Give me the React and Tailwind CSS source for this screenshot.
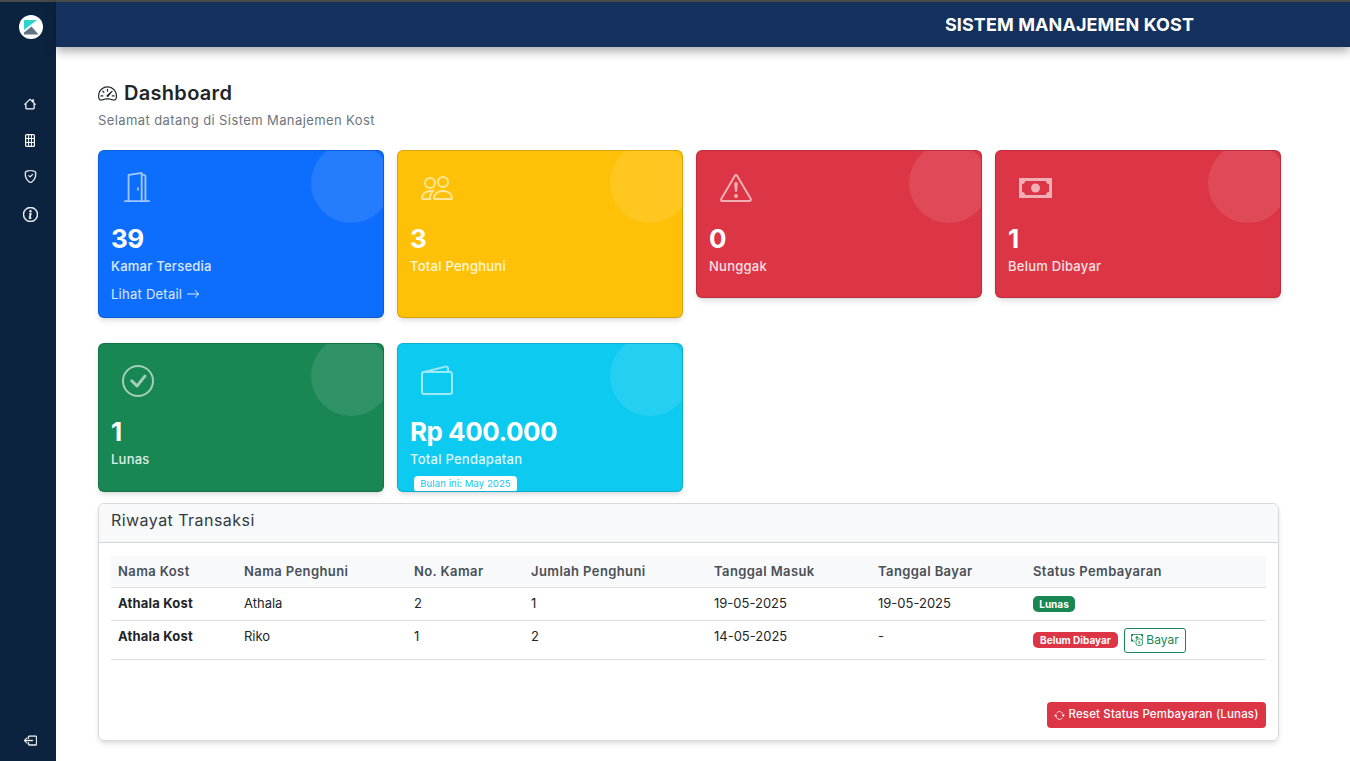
import {
  BsHouse,
  BsShieldCheck,
  BsInfoCircle,
  BsBoxArrowLeft,
  BsSpeedometer2,
  BsDoorOpen,
  BsPeople,
  BsExclamationTriangle,
  BsCheckCircle,
  BsWallet2,
  BsArrowRight,
  BsArrowRepeat,
  BsCashCoin,
} from 'react-icons/bs'

const font = { fontFamily: 'Inter, "Liberation Sans", sans-serif' }

const rows = [
  { kost: 'Athala Kost', nama: 'Athala', kamar: '2', jumlah: '1', masuk: '19-05-2025', bayar: '19-05-2025', lunas: true },
  { kost: 'Athala Kost', nama: 'Riko', kamar: '1', jumlah: '2', masuk: '14-05-2025', bayar: '-', lunas: false },
]

const cols = ['w-[126px]', 'w-[170px]', 'w-[117px]', 'w-[183px]', 'w-[164px]', 'w-[155px]', 'flex-1']
const heads = ['Nama Kost', 'Nama Penghuni', 'No. Kamar', 'Jumlah Penghuni', 'Tanggal Masuk', 'Tanggal Bayar', 'Status Pembayaran']

function CashIcon() {
  return (
    <svg width="33" height="20" viewBox="0 0 33 20" className="mt-[6px]" fill="currentColor">
      <path
        fillRule="evenodd"
        d="M0 0h33v20H0z M6 3a3 3 0 0 1-3 3v8a3 3 0 0 1 3 3h21a3 3 0 0 1 3-3V6a3 3 0 0 1-3-3z"
      />
      <circle cx="16.5" cy="10" r="4.5" />
    </svg>
  )
}

function RoomsIcon() {
  return (
    <svg width="10" height="13" viewBox="0 0 10 13" fill="none" stroke="currentColor" strokeWidth="1.2">
      <rect x="0.6" y="0.6" width="8.8" height="11.8" rx="1" />
      <path d="M3.6 0.6v11.8M6.4 0.6v11.8M0.6 4.5h8.8M0.6 8.5h8.8" strokeWidth="1" />
    </svg>
  )
}

function StatCard({ icon: Icon, value, label, bg, height, children, iconSize = 32 }) {
  return (
    <div className={`relative overflow-hidden rounded-md border border-black/15 shadow-md text-white px-[12px] ${bg} ${height}`}>
      <div className="absolute -top-2 -right-2 w-20 h-20 rounded-full bg-white/10" />
      <div className="h-[56px] pt-[21px] pl-[11px] flex items-start text-white/60">
        <Icon size={iconSize} />
      </div>
      <p className="text-[26px] leading-[40px] font-bold tracking-[-0.5px] mt-[12px]">{value}</p>
      <p className="text-[13px] leading-[18px] font-medium tracking-[0.25px] text-white/85 -mt-[2px]">{label}</p>
      {children}
    </div>
  )
}

export default function App() {
  return (
    <div className="flex h-[761px] bg-white overflow-hidden text-[#212529]" style={font}>
      {/* Sidebar */}
      <aside className="w-[56px] shrink-0 bg-[#0c2340] border-t-2 border-[#4a4a4a] flex flex-col items-center text-white">
        <svg width="24" height="24" viewBox="0 0 24 24" className="mt-[13px] ml-[6px]">
          <circle cx="12" cy="12" r="12" fill="#fff" />
          <path d="M5 5h13L5 15z" fill="#2dd4cf" />
          <path d="M5 19.5v-2L12.5 11.5l7 8z" fill="#5f7480" />
        </svg>
        <div className="flex flex-col items-center ml-[4px] mt-[47px]">
          <div className="h-[36px] flex items-center"><BsHouse size={12} strokeWidth={0.6} stroke="currentColor" /></div>
          <div className="h-[36px] flex items-center"><RoomsIcon /></div>
          <div className="h-[36px] flex items-center"><BsShieldCheck size={13} strokeWidth={0.5} stroke="currentColor" /></div>
          <div className="h-[38px] pt-[3px] flex items-center"><BsInfoCircle size={15} strokeWidth={0.6} stroke="currentColor" /></div>
        </div>
        <BsBoxArrowLeft size={13} strokeWidth={0.5} stroke="currentColor" className="mt-auto mb-[14px] ml-[4px]" />
      </aside>

      <div className="flex-1 min-w-0">
        {/* Topbar */}
        <header className="h-[47px] bg-[#14305c] border-t-2 border-[#4a4a4a] shadow-[0_4px_10px_rgba(0,0,0,0.35)] flex items-center justify-end pr-[156px]">
          <h1 className="text-[18px] font-bold tracking-[0.1px] text-white">SISTEM MANAJEMEN KOST</h1>
        </header>

        <main className="pl-[42px] pr-[71px] pt-[32px]">
          <div className="flex items-center gap-[7px] h-[28px]">
            <BsSpeedometer2 size={19} />
            <h2 className="text-[20px] font-semibold tracking-[0.3px]">Dashboard</h2>
          </div>
          <p className="text-[13px] leading-[20px] tracking-[0.4px] text-[#6c757d] mt-[3px]">Selamat datang di Sistem Manajemen Kost</p>

          <div className="grid grid-cols-[286px_286px_286px_286px] gap-x-[13px] items-start mt-[20px]">
            <StatCard icon={BsDoorOpen} value="39" label="Kamar Tersedia" bg="bg-[#0d6efd]" height="h-[168px]" iconSize={30}>
              <p className="text-[13px] leading-[18px] tracking-[0.25px] text-white/85 mt-[10px] flex items-center gap-1">
                Lihat Detail <BsArrowRight size={14} />
              </p>
            </StatCard>
            <StatCard icon={BsPeople} value="3" label="Total Penghuni" bg="bg-[#ffc107]" height="h-[168px]" />
            <StatCard icon={BsExclamationTriangle} value="0" label="Nunggak" bg="bg-[#dc3545]" height="h-[148px]" />
            <StatCard icon={CashIcon} value="1" label="Belum Dibayar" bg="bg-[#dc3545]" height="h-[148px]" />
          </div>

          <div className="grid grid-cols-[286px_286px_286px_286px] gap-x-[13px] items-start mt-[25px]">
            <StatCard icon={BsCheckCircle} value="1" label="Lunas" bg="bg-[#198754]" height="h-[149px]" />
            <StatCard icon={BsWallet2} value="Rp 400.000" label="Total Pendapatan" bg="bg-[#0dcaf0]" height="h-[149px]">
              <span className="block w-[103px] ml-[4px] mt-[8px] rounded bg-white text-[#0dcaf0] text-[9.5px] leading-[16px] tracking-[0.1px] text-center">
                Bulan ini: May 2025
              </span>
            </StatCard>
          </div>

          {/* Riwayat */}
          <section className="w-[1181px] h-[238px] mt-[11px] rounded-md border border-black/15 shadow-md flex flex-col">
            <div className="h-[39px] bg-[#f8f9fa] border-b border-black/15 rounded-t-md px-[12px] pb-[6px] flex items-center">
              <h3 className="text-[16px] tracking-[0.45px] text-[#343a40]">Riwayat Transaksi</h3>
            </div>
            <div className="px-[12px] pt-[13px] flex-1 flex flex-col">
              <div className="flex h-[32px] items-center bg-[#f8f9fa] border-b border-[#dee2e6] text-[13px] font-semibold tracking-[0.4px] text-[#495057]">
                {heads.map((h, i) => (
                  <div key={h} className={`${cols[i]} px-[7px]`}>{h}</div>
                ))}
              </div>
              {rows.map((r) => (
                <div key={r.nama} className={`flex items-center border-b border-[#dee2e6] text-[13px] ${r.lunas ? 'h-[33px]' : 'h-[39px]'}`}>
                  <div className={`${cols[0]} px-[7px] font-bold tracking-[0.2px] ${r.lunas ? '' : 'pb-[6px]'}`}>{r.kost}</div>
                  <div className={`${cols[1]} px-[7px] ${r.lunas ? '' : 'pb-[6px]'}`}>{r.nama}</div>
                  <div className={`${cols[2]} px-[7px] ${r.lunas ? '' : 'pb-[6px]'}`}>{r.kamar}</div>
                  <div className={`${cols[3]} px-[7px] ${r.lunas ? '' : 'pb-[6px]'}`}>{r.jumlah}</div>
                  <div className={`${cols[4]} px-[7px] ${r.lunas ? '' : 'pb-[6px]'}`}>{r.masuk}</div>
                  <div className={`${cols[5]} px-[7px] ${r.lunas ? '' : 'pb-[6px]'}`}>{r.bayar}</div>
                  <div className={`${cols[6]} px-[7px] flex items-center gap-[6px]`}>
                    {r.lunas ? (
                      <span className="rounded-[5px] bg-[#198754] text-white text-[10px] leading-[16px] font-bold w-[42px] text-center">Lunas</span>
                    ) : (
                      <>
                        <span className="rounded-[5px] bg-[#dc3545] text-white text-[10px] leading-[16px] font-bold w-[85px] text-center">Belum Dibayar</span>
                        <span className="h-[25px] w-[62px] justify-center rounded-[3px] border border-[#198754] text-[#198754] text-[12px] flex items-center gap-[3px]">
                          <BsCashCoin size={12} /> Bayar
                        </span>
                      </>
                    )}
                  </div>
                </div>
              ))}
              <div className="mt-auto mb-[12px] self-end h-[26px] w-[219px] justify-center rounded bg-[#dc3545] text-white text-[11.5px] tracking-[0.15px] font-medium flex items-center gap-[3px]">
                <BsArrowRepeat size={11} /> Reset Status Pembayaran (Lunas)
              </div>
            </div>
          </section>
        </main>
      </div>
    </div>
  )
}
